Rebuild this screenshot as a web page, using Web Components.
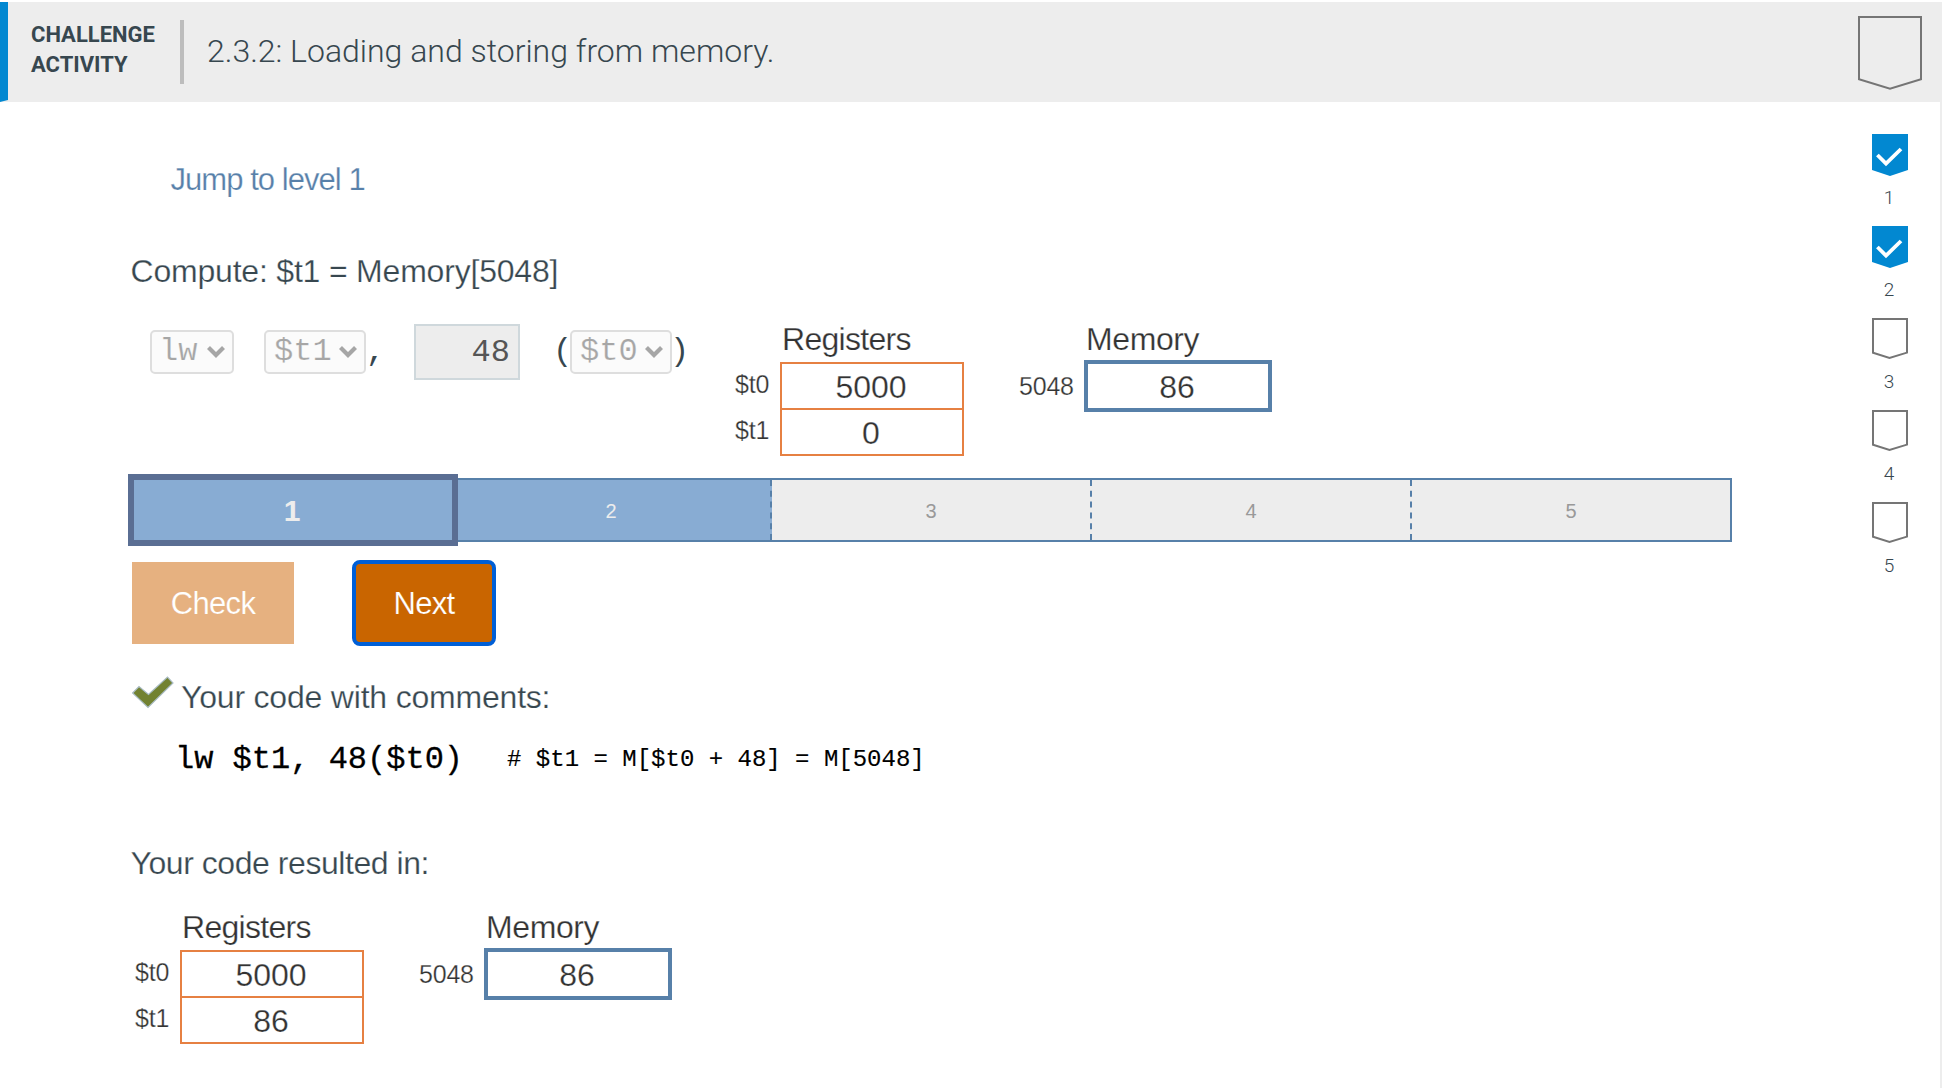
<!DOCTYPE html>
<html lang="en">
<head>
<meta charset="utf-8">
<title>2.3.2: Loading and storing from memory.</title>
<style>
html,body{margin:0;height:100%;background:#fff;overflow:hidden}
</style>
</head>
<body>
<challenge-page></challenge-page>
<script>
const define = (name, html, setup) => {
  const t = document.createElement('template');
  t.innerHTML = html;
  customElements.define(name, class extends HTMLElement {
    connectedCallback() {
      if (this.shadowRoot) return;
      const root = this.attachShadow({ mode: 'open' });
      root.append(t.content.cloneNode(true));
      if (setup) setup(this, root);
    }
  });
};

/* Light-weight sans text: a thin stroke in the background colour slims the stems. */
define('thin-text', `<style>
:host{display:block;white-space:pre;line-height:40px;font-family:"Liberation Sans",Arial,sans-serif;font-size:32px;-webkit-text-stroke:.25px var(--bg,#fff)}
</style><slot></slot>`);

define('shield-mark', `<style>
:host{display:block}svg{display:block}
</style><svg></svg>`, (el, root) => {
  const svg = root.querySelector('svg');
  const set = (w, h, inner) => {
    svg.setAttribute('width', w); svg.setAttribute('height', h);
    svg.setAttribute('viewBox', `0 0 ${w} ${h}`); svg.innerHTML = inner;
  };
  const kind = el.getAttribute('kind');
  if (kind === 'large') set(64, 75, '<path d="M1 1H63V63.3L32 72.8L1 63.3Z" fill="none" stroke="#757575" stroke-width="2"/>');
  else if (kind === 'done') set(36, 42, '<path d="M0 0H36V36L18 42L0 36Z" fill="#0288d1"/><path d="M5.4 21L14 29.6L29 15" fill="none" stroke="#fff" stroke-width="3.8"/>');
  else set(36, 42, '<path d="M1 1H35V34.6L17.5 40L1 34.8Z" fill="none" stroke="#757575" stroke-width="2"/>');
});

define('level-step', `<style>
:host{display:flex;flex-direction:column;align-items:center;height:92px;width:36px}
div{font:300 19px/24px Roboto,sans-serif;color:#37474f;margin-top:10px;padding-right:2px}
</style><shield-mark></shield-mark><div><slot></slot></div>`, (el, root) => {
  const s = document.createElement('shield-mark');
  if (el.hasAttribute('done')) s.setAttribute('kind', 'done');
  root.querySelector('shield-mark').replaceWith(s);
});

define('activity-header', `<style>
:host{display:flex;height:100px;margin-top:2px;background:#ededed;color:#37474f;font-family:Roboto,sans-serif}
.bar{width:8px;background:#0288d1;clip-path:polygon(0 0,100% 0,100% 98%,0 100%)}
.kind{margin-left:23px;width:149px;padding-top:18px;font:700 22px/30px Roboto,sans-serif}
.rule{width:4px;height:64px;margin-top:18px;background:#bdbdbd}
.title{margin-left:23px;flex:1;padding-top:29px;font:300 32px/40px Roboto,sans-serif;white-space:pre}
shield-mark{margin:14px 20px 0 0}
</style><div class="bar"></div><div class="kind">CHALLENGE<br>ACTIVITY</div><div class="rule"></div><div class="title"><slot></slot></div><shield-mark kind="large"></shield-mark>`);

define('code-select', `<style>
:host{box-sizing:border-box;display:flex;justify-content:space-between;align-items:center;height:44px;border:2px solid #dedede;border-radius:5px;background:#fbfbfb;padding:0 7px;color:#a6a6a6;font:32px/40px "Liberation Mono",monospace}
span{-webkit-text-stroke:.2px #fbfbfb}
svg{display:block}
</style><span><slot></slot></span><svg width="18" height="12" viewBox="0 0 18 12"><path d="M1.5 1.5L9 9L16.5 1.5" fill="none" stroke="#a6a6a6" stroke-width="4.2"/></svg>`);

define('code-entry', `<style>
:host{display:flex;height:62px;padding-top:6px;box-sizing:border-box;align-items:flex-start;width:604px;font:32px/44px "Liberation Mono",monospace;color:#37474f}
code-select,i{margin-top:6px}
i{font-style:normal;width:19px;height:42px}
.field{box-sizing:border-box;width:106px;height:56px;border:2px solid #cfd8dc;background:#ededed;color:#555;padding-right:8px;text-align:right;line-height:53px}
</style>
<code-select style="margin-left:19px;width:84px">lw</code-select>
<code-select style="margin-left:30px;width:102px;padding-left:8px">$t1</code-select><i>,</i>
<div class="field" style="margin-left:29px">48</div>
<i style="margin-left:31px;text-indent:2px">(</i><code-select style="width:102px;padding-left:8px">$t0</code-select><i style="text-indent:-2px">)</i>`);

define('memory-bank', `<style>
:host{display:flex;color:#333}
.names{display:flex;flex-direction:column;padding-top:43px}
.names thin-text{font-size:25px;line-height:46px;height:46px;letter-spacing:-.2px}
.head{line-height:42px;padding-left:2px}
.cells{box-sizing:border-box;width:184px;border:2px solid #e68042;margin-top:2px}
.cells thin-text{text-align:center;line-height:44px;height:44px;padding:1px 2px 0 0;box-sizing:border-box}
.cells thin-text+thin-text{border-top:2px solid #e68042;height:46px;padding-right:0;text-indent:-2px}
:host([kind=memory]) .cells{width:188px;border:4px solid #5780a9;margin-top:0}
:host([kind=memory]) .names{padding-top:45px}
</style><div class="names"></div><div><thin-text class="head"></thin-text><div class="cells"></div></div>`, (el, root) => {
  const names = root.querySelector('.names'), cells = root.querySelector('.cells'), head = root.querySelector('.head');
  const mem = el.getAttribute('kind') === 'memory';
  names.style.width = mem ? '65px' : '45px';
  head.textContent = mem ? 'Memory' : 'Registers';
  head.style.letterSpacing = mem ? '-.4px' : '-.7px';
  for (const pair of el.getAttribute('values').split(' ')) {
    const [n, v] = pair.split('=');
    const a = document.createElement('thin-text'); a.textContent = n; names.append(a);
    const b = document.createElement('thin-text'); b.textContent = v; cells.append(b);
  }
});

define('level-progress', `<style>
:host{box-sizing:border-box;display:flex;width:1602px;height:64px;border:2px solid #5780a9;background:#ededed;font:20px/62px "Liberation Sans",Arial,sans-serif;color:#999;text-align:center}
div{box-sizing:border-box;flex:none;width:320px;border-right:2px dashed #5780a9}
div:last-child{border:0;width:318px}
.done{background:#88acd3;color:#ededed}
.now{width:330px;height:72px;margin:-6px -6px 0 -4px;border:6px solid #5a6e93;font-weight:700;font-size:30px;position:relative;text-indent:-2px}
</style><div class="done now">1</div><div class="done">2</div><div>3</div><div>4</div><div>5</div>`);

define('action-button', `<style>
:host{box-sizing:border-box;display:flex;justify-content:center;align-items:center;color:#fff}
:host([kind=check]){width:162px;height:82px;margin-top:2px;background:#e6b180;--bg:#e6b180}
:host([kind=next]){width:144px;height:86px;background:#c96500;--bg:#c96500;border:4px solid #005fd6;border-radius:8px}
thin-text{font-size:31px;letter-spacing:-.7px;margin-top:1px;-webkit-text-stroke-width:.2px}
</style><thin-text><slot></slot></thin-text>`);

define('pass-icon', `<style>:host{display:block}svg{display:block}</style>
<svg width="43" height="34" viewBox="0 0 43 34"><path d="M.6 17L7 10.5L16.5 18.5L35.5 1L41 7L16 31.5Z" fill="#728231" stroke="#a9bcc4" stroke-width="1.2"/></svg>`);

define('challenge-page', `<style>
:host{display:flex;flex-direction:column;height:1088px;overflow:hidden;color:#37474f}
.body{flex:1;display:flex;border-right:2px solid #ededed}
.main{flex:1;padding-left:131px;display:flex;flex-direction:column}
.row{display:flex;align-items:flex-start}
.levels{width:68px;padding-top:32px}
.jump{color:#5780a9;margin:58px 0 0 39.5px;font-size:31px;letter-spacing:-.95px}
.code{font:32px/40px "Liberation Mono",monospace;color:#000;white-space:pre;-webkit-text-stroke:.3px #000}
.note{font:24px/40px "Liberation Mono",monospace;color:#000;white-space:pre;-webkit-text-stroke:.15px #000}
</style>
<activity-header>2.3.2: Loading and storing from memory.</activity-header>
<div class="body">
 <div class="main">
  <thin-text class="jump">Jump to level 1</thin-text>
  <thin-text style="margin:51px 0 0 -.5px;letter-spacing:-.2px">Compute: $t1 = Memory[5048]</thin-text>
  <div class="row" style="margin-top:27px;height:160px">
   <code-entry></code-entry>
   <memory-bank values="$t0=5000 $t1=0"></memory-bank>
   <memory-bank kind="memory" values="5048=86" style="margin-left:55px"></memory-bank>
  </div>
  <level-progress style="margin-left:-1px"></level-progress>
  <div class="row" style="margin:18px 0 0 1px;height:86px">
   <action-button kind="check">Check</action-button>
   <action-button kind="next" style="margin-left:58px">Next</action-button>
  </div>
  <div class="row" style="margin:30px 0 0 1px;height:42px">
   <pass-icon></pass-icon>
   <thin-text style="margin:1px 0 0 6px;letter-spacing:-.2px">Your code with comments:</thin-text>
  </div>
  <div class="row" style="margin:22px 0 0 44px;height:40px">
   <span class="code">lw $t1, 48($t0)</span><span class="note" style="margin-left:44px"># $t1 = M[$t0 + 48] = M[5048]</span>
  </div>
  <thin-text style="margin:63px 0 0 -.5px;letter-spacing:-.45px">Your code resulted in:</thin-text>
  <div class="row" style="margin:23px 0 0 4px">
   <memory-bank values="$t0=5000 $t1=86"></memory-bank>
   <memory-bank kind="memory" values="5048=86" style="margin-left:55px"></memory-bank>
  </div>
 </div>
 <div class="levels">
  <level-step done>1</level-step><level-step done>2</level-step><level-step>3</level-step><level-step>4</level-step><level-step>5</level-step>
 </div>
</div>`);
</script>
</body>
</html>
